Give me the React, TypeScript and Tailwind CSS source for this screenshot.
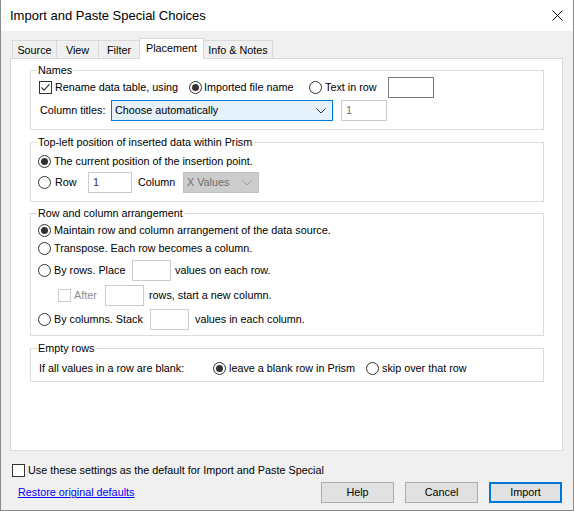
import React from 'react';

const font = { fontFamily: '"Liberation Sans", Arial, sans-serif' };

const Radio: React.FC<{ checked?: boolean }> = ({ checked = false }) => (
  <span className="w-[13px] h-[13px] shrink-0 rounded-full border border-[#333333] bg-white flex items-center justify-center">
    {checked && <span className="w-[7px] h-[7px] rounded-full bg-[#333333]"></span>}
  </span>
);

const Checkbox: React.FC<{ checked?: boolean; disabled?: boolean }> = ({ checked = false, disabled = false }) => (
  <span
    className={`w-[13px] h-[13px] shrink-0 border bg-white flex items-center justify-center ${
      disabled ? 'border-[#cccccc]' : 'border-[#333333]'
    }`}
  >
    {checked && (
      <svg width="11" height="11" viewBox="0 0 11 11" fill="none">
        <path d="M1.5 5.5 L4.2 8.2 L9.5 2.2" stroke="#333333" strokeWidth="1.1" />
      </svg>
    )}
  </span>
);

const Chevron: React.FC<{ color?: string }> = ({ color = '#333333' }) => (
  <svg width="10" height="6" viewBox="0 0 10 6" fill="none">
    <path d="M0.5 0.5 L5 5 L9.5 0.5" stroke={color} strokeWidth="1" />
  </svg>
);

const TextBox: React.FC<{ w: string; value?: string; dark?: boolean; grey?: boolean }> = ({ w, value = '', dark = false, grey = false }) => (
  <span
    className={`${w} h-[21px] shrink-0 bg-white border flex items-center pl-[4px] ${
      dark ? 'border-[#7a7a7a]' : 'border-[#cccccc]'
    } ${grey ? 'text-[#6d6d6d]' : 'text-[#333333]'}`}
  >
    {value}
  </span>
);

const Group: React.FC<{ title: string; className?: string; children: React.ReactNode }> = ({ title, className = '', children }) => (
  <fieldset className={`ml-[19px] w-[514px] border border-[#dcdcdc] ${className}`}>
    <legend className="ml-[6px] px-[1px] leading-[14px]">{title}</legend>
    {children}
  </fieldset>
);

const tabs = [
  { label: 'Source', w: 'w-[44px] border-l' },
  { label: 'View', w: 'w-[42px] border-l' },
  { label: 'Filter', w: 'w-[41px] border-l' },
];

export default function App() {
  return (
    <div className="w-[574px] h-[511px] bg-[#f0f0f0] border-l border-r border-b border-[#8a8a8a] text-[10.8px] text-black overflow-hidden" style={font}>
      {/* title bar */}
      <div className="h-[31px] bg-white flex items-center justify-between pl-[9px] pr-[10px]">
        <span className="text-[13px]">Import and Paste Special Choices</span>
        <svg width="11" height="11" viewBox="0 0 11 11" fill="none">
          <path d="M0.5 0.5 L10.5 10.5 M10.5 0.5 L0.5 10.5" stroke="#111111" strokeWidth="1" />
        </svg>
      </div>

      {/* tabs */}
      <div className="mt-[7px] ml-[11px] h-[21px] flex items-end">
        {tabs.map((t) => (
          <div key={t.label} className={`${t.w} h-[19px] border-t border-[#d9d9d9] flex items-center justify-center`}>
            {t.label}
          </div>
        ))}
        <div className="relative z-10 w-[65px] h-[21px] bg-white border-l border-t border-r border-[#d9d9d9] flex items-center justify-center pb-[2px]">
          Placement
        </div>
        <div className="w-[69px] h-[19px] border-t border-r border-[#d9d9d9] flex items-center justify-center">
          Info &amp; Notes
        </div>
      </div>

      {/* tab panel */}
      <div className="-mt-[1px] ml-[9px] w-[553px] h-[393px] bg-white border border-[#d9d9d9] pt-[4px]">
        <Group title="Names">
          <div className="pl-[8px] pb-[8px]">
            <div className="h-[21px] flex items-center">
              <span className="w-[150px] flex items-center gap-[3px]">
                <Checkbox checked />
                Rename data table, using
              </span>
              <span className="w-[120px] flex items-center gap-[2px]">
                <Radio checked />
                Imported file name
              </span>
              <span className="w-[79px] flex items-center gap-[3px]">
                <Radio />
                Text in row
              </span>
              <TextBox w="w-[46px]" dark />
            </div>
            <div className="mt-[2px] h-[21px] flex items-center">
              <span className="w-[72px] pl-[1px]">Column titles:</span>
              <span className="w-[222px] h-[21px] bg-[#e5f1fb] border border-[#0078d7] flex items-center justify-between pl-[3px] pr-[6px]">
                Choose automatically
                <Chevron />
              </span>
              <span className="ml-[8px]">
                <TextBox w="w-[46px]" value="1" grey />
              </span>
            </div>
          </div>
        </Group>

        <Group title="Top-left position of inserted data within Prism" className="mt-[5px]">
          <div className="pl-[7px] pt-[3px] pb-[8px]">
            <div className="h-[18px] flex items-center gap-[3px]">
              <Radio checked />
              The current position of the insertion point.
            </div>
            <div className="mt-[2px] h-[21px] flex items-center">
              <span className="w-[50px] flex items-center gap-[4px]">
                <Radio />
                Row
              </span>
              <TextBox w="w-[44px]" value="1" />
              <span className="w-[45px] ml-[6px]">Column</span>
              <span className="w-[76px] h-[21px] bg-[#cccccc] border border-[#bfbfbf] text-[#6d6d6d] flex items-center justify-between pl-[3px] pr-[6px]">
                X Values
                <Chevron color="#a0a0a0" />
              </span>
            </div>
          </div>
        </Group>

        <Group title="Row and column arrangement" className="mt-[4px]">
          <div className="pl-[7px] pt-[1px] pb-[5px]">
            <div className="h-[18px] flex items-center gap-[3px]">
              <Radio checked />
              Maintain row and column arrangement of the data source.
            </div>
            <div className="h-[18px] flex items-center gap-[3px]">
              <Radio />
              Transpose. Each row becomes a column.
            </div>
            <div className="mt-[3px] h-[21px] flex items-center">
              <span className="w-[94px] flex items-center gap-[3px]">
                <Radio />
                By rows. Place
              </span>
              <TextBox w="w-[39px]" />
              <span className="ml-[4px]">values on each row.</span>
            </div>
            <div className="mt-[4px] h-[21px] flex items-center pl-[20px]">
              <span className="w-[47px] flex items-center gap-[3px] text-[#8c8c8c]">
                <Checkbox disabled />
                After
              </span>
              <TextBox w="w-[39px]" />
              <span className="ml-[5px]">rows, start a new column.</span>
            </div>
            <div className="mt-[3px] h-[21px] flex items-center">
              <span className="w-[112px] flex items-center gap-[3px]">
                <Radio />
                By columns. Stack
              </span>
              <TextBox w="w-[39px]" />
              <span className="ml-[6px]">values in each column.</span>
            </div>
          </div>
        </Group>

        <Group title="Empty rows" className="mt-[5px]">
          <div className="pl-[8px] pt-[4px] pb-[4px]">
            <div className="h-[18px] flex items-center">
              <span className="w-[174px]">If all values in a row are blank:</span>
              <span className="w-[153px] flex items-center gap-[3px]">
                <Radio checked />
                leave a blank row in Prism
              </span>
              <span className="flex items-center gap-[3px]">
                <Radio />
                skip over that row
              </span>
            </div>
          </div>
        </Group>
      </div>

      {/* footer */}
      <div className="mt-[11px] ml-[11px] h-[16px] flex items-center gap-[3px]">
        <Checkbox />
        Use these settings as the default for Import and Paste Special
      </div>
      <div className="mt-[4px] h-[21px] flex items-center justify-between pl-[17px] pr-[11px]">
        <a href="#" className="text-[#0000ff] underline">
          Restore original defaults
        </a>
        <div className="flex gap-[11px]">
          <button className="w-[73px] h-[21px] bg-[#e1e1e1] border border-[#adadad]">Help</button>
          <button className="w-[73px] h-[21px] bg-[#e1e1e1] border border-[#adadad]">Cancel</button>
          <button className="w-[73px] h-[21px] bg-[#e1e1e1] border-2 border-[#0078d7]">Import</button>
        </div>
      </div>
    </div>
  );
}
